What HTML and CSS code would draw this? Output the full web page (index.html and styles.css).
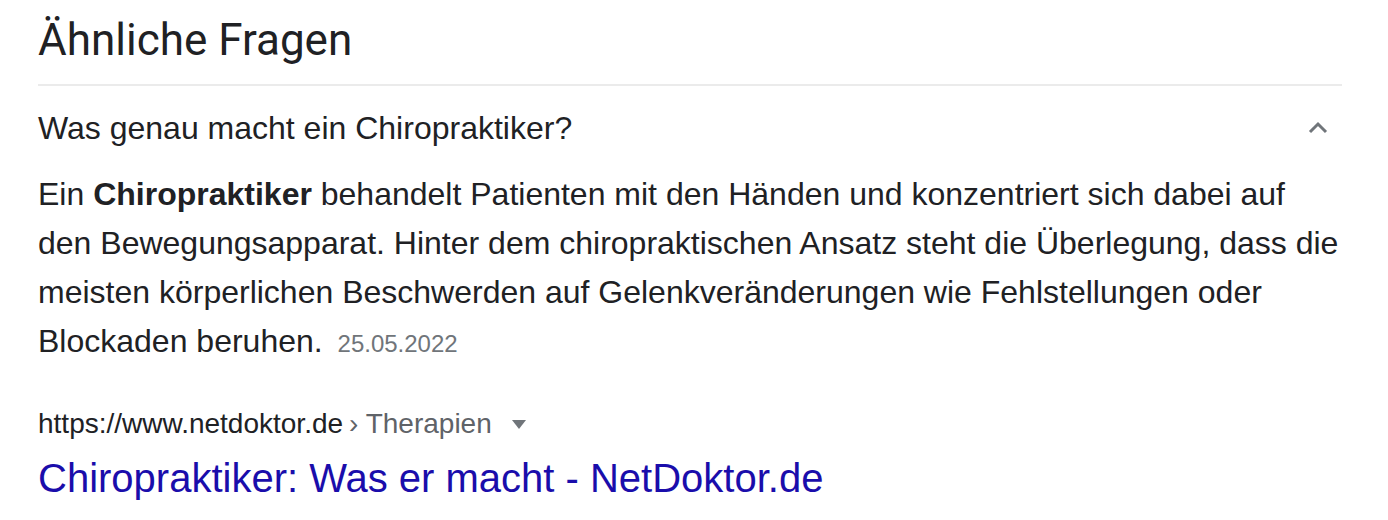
FILE: index.html
```html
<!DOCTYPE html>
<html lang="de">
<head>
  <meta charset="UTF-8" />
  <title>Ähnliche Fragen</title>
  <link rel="stylesheet" href="styles.css">
</head>
<body>
  <div class="related">
    <h2 class="related-title">Ähnliche Fragen</h2>
    <div class="question">
      <span>Was genau macht ein Chiropraktiker?</span>
      <svg class="chevron" width="24" height="24" viewBox="0 0 24 24">
        <path d="M4 16 L12 8 L20 16" fill="none" stroke="#70757a" stroke-width="3"/>
      </svg>
    </div>
    <p class="answer">
      Ein <b>Chiropraktiker</b> behandelt Patienten mit den Händen und konzentriert sich dabei auf
      den Bewegungsapparat. Hinter dem chiropraktischen Ansatz steht die Überlegung, dass die
      meisten körperlichen Beschwerden auf Gelenkveränderungen wie Fehlstellungen oder
      Blockaden beruhen. <span class="date">25.05.2022</span>
    </p>
    <div class="source">
      <div class="url">
        https://www.netdoktor.de <span class="crumb">› Therapien</span>
        <span class="arrow"></span>
      </div>
      <a class="result-link" href="#">Chiropraktiker: Was er macht - NetDoktor.de</a>
    </div>
  </div>
</body>
</html>
```

FILE: styles.css
```css
body {
  margin: 0;
  background: #fff;
  font-family: "Liberation Sans", Arial, sans-serif;
  color: #202124;
}

.related {
  width: 1304px;
  padding: 12px 0 0 38px;
}

.related-title {
  margin: 0;
  font-family: Roboto, "Open Sans", sans-serif;
  font-weight: 400;
  font-size: 44px;
  line-height: 56px;
  padding-bottom: 16px;
  border-bottom: 2px solid #ebebeb;
}

.question {
  display: flex;
  justify-content: space-between;
  align-items: center;
  height: 84px;
  font-size: 32px;
}

.chevron {
  margin-right: 12px;
}

.answer {
  margin: 0;
  font-size: 32px;
  line-height: 49px;
}

.date {
  font-size: 24px;
  color: #70757a;
  margin-left: 6px;
}

.source {
  padding-top: 38px;
}

.url {
  font-size: 28px;
  line-height: 36px;
  display: flex;
  align-items: center;
  gap: 6px;
}

.crumb {
  color: #5f6368;
}

.arrow {
  margin-left: 14px;
  border-left: 7px solid transparent;
  border-right: 7px solid transparent;
  border-top: 9px solid #70757a;
}

.result-link {
  display: block;
  margin-top: 8px;
  font-size: 40px;
  line-height: 56px;
  color: #1a0dab;
  text-decoration: none;
}
```
